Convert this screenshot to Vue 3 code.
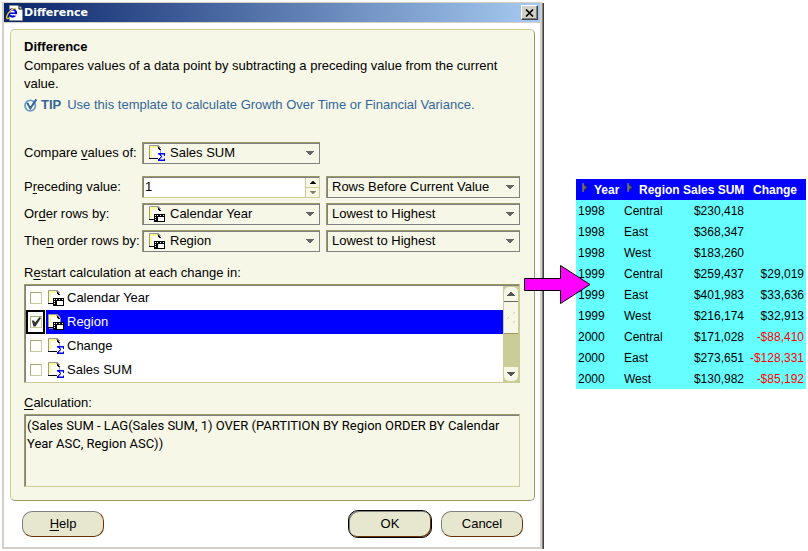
<script setup>
import { ref } from 'vue'

const compare = ref('Sales SUM')
const preceding = ref('1')
const offsetUnit = ref('Rows Before Current Value')
const orderBy = ref('Calendar Year')
const orderDirection = ref('Lowest to Highest')
const thenBy = ref('Region')
const thenDirection = ref('Lowest to Highest')
const formula = ref('(Sales SUM - LAG(Sales SUM, 1) OVER (PARTITION BY Region ORDER BY Calendar Year ASC, Region ASC))')

const items = ref([
  { name: 'Calendar Year', kind: 'axis', checked: false },
  { name: 'Region', kind: 'axis', checked: true },
  { name: 'Change', kind: 'sum', checked: false },
  { name: 'Sales SUM', kind: 'sum', checked: false }
])
const selected = ref(1)

const rows = [
  ['1998', 'Central', '$230,418', ''],
  ['1998', 'East', '$368,347', ''],
  ['1998', 'West', '$183,260', ''],
  ['1999', 'Central', '$259,437', '$29,019'],
  ['1999', 'East', '$401,983', '$33,636'],
  ['1999', 'West', '$216,174', '$32,913'],
  ['2000', 'Central', '$171,028', '-$88,410'],
  ['2000', 'East', '$273,651', '-$128,331'],
  ['2000', 'West', '$130,982', '-$85,192']
]
</script>

<template>
  <svg class="defs" aria-hidden="true">
    <symbol id="page-shape" viewBox="0 0 17 17">
      <path d="M1 0.5H9L12.5 4V14.5H1Z" fill="#fff" />
      <path d="M2 12V2H8" fill="none" stroke="#ffff99" stroke-width="2" />
      <path d="M0.5 14V0.5H8" fill="none" stroke="#999" />
      <path d="M8 0h2v1h1v1h1v1h-2V2H8Z" fill="#999" />
      <path d="M9 2h1v1h1v1h1v1h-2V4H9Z" fill="#000" />
    </symbol>
    <symbol id="icon-axis" viewBox="0 0 17 17">
      <use href="#page-shape" width="17" height="17" />
      <path d="M0 13.5H5" stroke="#000" />
      <path d="M5 8h11v8H5Z" fill="#000" />
      <path d="M9 11h6v4H9Z" fill="#fff" />
      <path d="M6 9h1v1H6ZM6 11h1v1H6ZM6 13h1v1H6ZM8 9h1v1H8ZM11 9h1v1h-1ZM14 9h1v1h-1Z" fill="#fff" />
    </symbol>
    <symbol id="icon-sum" viewBox="0 0 17 17">
      <use href="#page-shape" width="17" height="17" />
      <path d="M0 13.5H9" stroke="#000" />
      <path d="M11.5 5V8" stroke="#999" />
      <path d="M9 8h7v3h-1V9.5h-3v1h1v2h-1v1h-1v1h4v-1h1v2.5H9v-2h1v-1h1v-1h1v-1h-1v-1h-1V9.5H9Z" fill="#0000ff" />
    </symbol>
    <symbol id="icon-down" viewBox="0 0 8 4"><path d="M0 0h8v1H7v1H6v1H5v1H3V3H2V2H1V1H0Z" /></symbol>
    <symbol id="icon-up" viewBox="0 0 8 4"><path d="M0 4h8V3H7V2H6V1H5V0H3v1H2v1H1v1H0Z" /></symbol>
  </svg>

  <main class="page">
    <section class="dialog" role="dialog" aria-labelledby="dialog-title">
      <header class="titlebar">
        <svg class="app-icon" viewBox="0 0 17 16" aria-hidden="true">
          <path d="M3.5 0.5H13L16.5 4V15.5H3.5Z" fill="#fff" stroke="#888" stroke-width=".6" />
          <path d="M13 0V4H17" fill="none" stroke="#000" />
          <circle cx="6.5" cy="8" r="3.6" fill="none" stroke="#0a0ad8" stroke-width="2.2" />
          <path d="M3.5 8.2H10" stroke="#0a0ad8" stroke-width="1.6" />
          <path d="M8 9.2H12V10.6H8Z" fill="#fff" />
          <path d="M10 3.5C7 2.6 2 7 0.8 11.5C0.2 14 1.8 14.4 4 12.5" fill="none" stroke="#e5d51c" stroke-width="1.3" />
        </svg>
        <span id="dialog-title" class="title">Difference</span>
        <button class="close" type="button" aria-label="Close">
          <svg viewBox="0 0 9 8" aria-hidden="true"><path d="M1 0.5L8 7.5M8 0.5L1 7.5" stroke="#000" stroke-width="1.6" /></svg>
        </button>
      </header>

      <div class="content">
        <form class="panel" @submit.prevent>
          <h1>Difference</h1>
          <p>Compares values of a data point by subtracting a preceding value from the current value.</p>
          <p class="tip">
            <svg viewBox="0 0 14 14" aria-hidden="true">
              <circle cx="6.2" cy="7.6" r="5.2" fill="#fff" stroke="#6f9cc6" stroke-width="1.8" />
              <path d="M3.2 4.8L6.3 10.4L12.3 1.4" fill="none" stroke="#336699" stroke-width="2" />
            </svg>
            <strong>TIP</strong><span>Use this template to calculate Growth Over Time or Financial Variance.</span>
          </p>

          <div class="fields">
            <label for="compare">Compare <u>v</u>alues of:</label>
            <div class="combo with-icon">
              <select id="compare" v-model="compare"><option>Sales SUM</option></select>
              <svg class="kind"><use href="#icon-sum" /></svg>
              <svg class="arrow"><use href="#icon-down" /></svg>
            </div>
          </div>

          <div class="fields group">
            <label for="preceding">P<u>r</u>eceding value:</label>
            <div class="spinner">
              <input id="preceding" v-model="preceding" type="text">
              <div class="steps">
                <button type="button" aria-label="Increase"><svg viewBox="0 0 8 4"><use href="#icon-up" /></svg></button>
                <button type="button" aria-label="Decrease" class="dim"><svg viewBox="0 0 8 4"><use href="#icon-down" /></svg></button>
              </div>
            </div>
            <div class="combo">
              <select v-model="offsetUnit" aria-label="Unit"><option>Rows Before Current Value</option></select>
              <svg class="arrow"><use href="#icon-down" /></svg>
            </div>

            <label for="order">Or<u>d</u>er rows by:</label>
            <div class="combo with-icon">
              <select id="order" v-model="orderBy"><option>Calendar Year</option><option>Region</option></select>
              <svg class="kind"><use href="#icon-axis" /></svg>
              <svg class="arrow"><use href="#icon-down" /></svg>
            </div>
            <div class="combo">
              <select v-model="orderDirection" aria-label="Order direction"><option>Lowest to Highest</option><option>Highest to Lowest</option></select>
              <svg class="arrow"><use href="#icon-down" /></svg>
            </div>

            <label for="then">The<u>n</u> order rows by:</label>
            <div class="combo with-icon">
              <select id="then" v-model="thenBy"><option>Calendar Year</option><option>Region</option></select>
              <svg class="kind"><use href="#icon-axis" /></svg>
              <svg class="arrow"><use href="#icon-down" /></svg>
            </div>
            <div class="combo">
              <select v-model="thenDirection" aria-label="Then order direction"><option>Lowest to Highest</option><option>Highest to Lowest</option></select>
              <svg class="arrow"><use href="#icon-down" /></svg>
            </div>
          </div>

          <div id="restart-label" class="caption">R<u>e</u>start calculation at each change in:</div>
          <div class="list" role="group" aria-labelledby="restart-label">
            <div class="items">
              <label v-for="(item, i) in items" :key="item.name" class="item" :class="{ selected: i === selected }" @click="selected = i">
                <span class="tick"><input v-model="item.checked" type="checkbox"></span>
                <span class="entry">
                  <svg class="kind"><use :href="'#icon-' + item.kind" /></svg>
                  {{ item.name }}
                </span>
              </label>
            </div>
            <div class="scrollbar">
              <button type="button" class="up" aria-label="Scroll up"><svg viewBox="0 0 8 4"><use href="#icon-up" /></svg></button>
              <div class="thumb">
                <svg viewBox="0 0 10 12"><path d="M1 7L3 5M7 2L9 0M7 11L9 9" stroke="#cccc99" /></svg>
              </div>
              <button type="button" class="down" aria-label="Scroll down"><svg viewBox="0 0 8 4"><use href="#icon-down" /></svg></button>
            </div>
          </div>

          <label class="caption calc" for="formula"><u>C</u>alculation:</label>
          <textarea id="formula" v-model="formula" readonly></textarea>
        </form>

        <footer class="actions">
          <button type="button"><u>H</u>elp</button>
          <span class="space"></span>
          <button type="button" class="default">OK</button>
          <button type="button">Cancel</button>
        </footer>
      </div>
    </section>

    <section class="result">
      <table>
        <thead>
          <tr>
            <th class="year"><svg class="pivot" viewBox="0 0 6 9"><path d="M1 0.5L5 4.5L1 8.5Z" fill="#666" stroke="#222" /><path d="M1 0V9" stroke="#999" /></svg>Year</th>
            <th class="region"><svg class="pivot" viewBox="0 0 6 9"><path d="M1 0.5L5 4.5L1 8.5Z" fill="#666" stroke="#222" /><path d="M1 0V9" stroke="#999" /></svg>Region</th>
            <th class="sales">Sales SUM</th>
            <th class="change">Change</th>
          </tr>
        </thead>
        <tbody>
          <tr v-for="row in rows" :key="row[0] + row[1]">
            <td>{{ row[0] }}</td>
            <td>{{ row[1] }}</td>
            <td class="num">{{ row[2] }}</td>
            <td class="num" :class="{ negative: row[3].startsWith('-') }">{{ row[3] }}</td>
          </tr>
        </tbody>
      </table>
      <svg class="pointer" viewBox="0 0 67 40" aria-hidden="true">
        <path d="M0.5 13.5H36.5V0.5L66 19.5L36.5 38.5V25.5H0.5Z" fill="#f0f" stroke="#000" />
      </svg>
    </section>
  </main>
</template>

<style>
body {
  background: #fff;
}
</style>

<style scoped>
.defs {
  position: absolute;
  width: 0;
  height: 0;
}
.page {
  display: flex;
  gap: 32px;
  align-items: flex-start;
  padding: 2px 2px 0;
  font: 13px/18px "Liberation Sans", Arial, sans-serif;
  color: #000;
}
.page *,
.page {
  box-sizing: border-box;
}
button,
select,
input,
textarea {
  margin: 0;
  padding: 0;
  font: inherit;
  color: inherit;
  border-radius: 0;
  appearance: none;
}
u {
  text-underline-offset: 2px;
}
.dialog {
  flex: 1;
  min-width: 0;
  border: solid #d4d0c8;
  border-width: 1px 2px 2px;
  box-shadow: 1px 1px #808080, 2px 1px #404040;
  margin-right: 2px;
  background: #fff;
}
.titlebar {
  display: flex;
  align-items: center;
  height: 20px;
  padding: 0 2px;
  border-bottom: 1px solid #d4d0c8;
  background: linear-gradient(90deg, #0a246a, #a6caf0);
}
.app-icon {
  width: 17px;
  height: 16px;
}
.title {
  flex: 1;
  margin-left: 1px;
  font: bold 11px/16px "DejaVu Sans", sans-serif;
  color: #fff;
}
.close {
  display: flex;
  align-items: center;
  justify-content: center;
  width: 17px;
  height: 15px;
  border: 1px solid;
  border-color: #fff #404040 #404040 #fff;
  box-shadow: inset -1px -1px #808080;
  background: #d4d0c8;
}
.close svg {
  width: 9px;
  height: 8px;
}
.content {
  padding: 6px 5px 9px 6px;
}
.panel {
  display: flex;
  flex-direction: column;
  padding: 7px 14px 13px 13px;
  border: 1px solid;
  border-color: #cccc99 #999966 #999966 #cccc99;
  border-radius: 5px;
  background: #f7f7e7;
}
h1 {
  margin: 0;
  font-size: 13px;
  line-height: 20px;
}
p {
  margin: 0;
}
.tip {
  display: flex;
  align-items: center;
  margin: 3px 0 28px;
  color: #336699;
}
.tip svg {
  width: 14px;
  height: 14px;
  margin-right: 3px;
}
.tip span {
  margin-left: 6px;
}
.fields {
  display: grid;
  grid-template-columns: 118px minmax(0, 178fr) minmax(0, 200fr);
  gap: 5px 0;
  align-items: center;
}
.fields.group {
  margin-top: 12px;
}
.fields > :nth-child(3n) {
  margin-left: 6px;
}
.fields label {
  white-space: nowrap;
}
.combo {
  display: grid;
  grid-template-columns: minmax(0, 1fr) 19px;
  align-items: center;
  height: 22px;
  border: 1px solid;
  border-color: #999966 #808080 #808080 #999966;
  box-shadow: inset 1px 1px #808080;
}
.combo select {
  grid-area: 1 / 1 / 2 / 3;
  width: 100%;
  height: 20px;
  padding-left: 5px;
  border: 0;
  background: transparent;
}
.combo.with-icon select {
  padding-left: 27px;
}
.kind {
  width: 17px;
  height: 17px;
  margin-top: 1px;
}
.combo .kind {
  grid-area: 1 / 1;
  margin-left: 6px;
  pointer-events: none;
}
.arrow {
  grid-area: 1 / 2;
  width: 8px;
  height: 4px;
  margin-left: 6px;
  fill: #666;
  pointer-events: none;
}
.spinner {
  display: flex;
  height: 22px;
  border: 1px solid;
  border-color: #999966 #cccc99 #cccc99 #999966;
  box-shadow: inset 1px 1px #808080;
  background: #fff;
}
.spinner input {
  flex: 1;
  min-width: 0;
  padding-left: 2px;
  border: 0;
  background: transparent;
}
.steps {
  display: grid;
  width: 14px;
  margin-top: 1px;
  border-left: 1px solid #cccc99;
  background: #f7f7e7;
}
.steps button,
.scrollbar button {
  display: flex;
  align-items: center;
  justify-content: center;
  border: 0;
  background: #f7f7e7;
}
.steps .dim {
  border-top: 1px solid #cccc99;
  fill: #808066;
}
.steps svg {
  width: 6px;
  height: 3px;
}
.caption {
  margin: 12px 0 2px;
}
.calc {
  margin-top: 11px;
}
.list {
  display: flex;
  border: 1px solid;
  border-color: #999966 #cccc99 #cccc99 #999966;
  box-shadow: inset 1px 1px #808080;
  padding: 1px 0 0 1px;
  background: #fff;
}
.items {
  flex: 1;
}
.item {
  display: flex;
  height: 24px;
}
.tick {
  display: flex;
  align-items: center;
  justify-content: center;
  width: 19px;
  padding-left: 1px;
  border: 2px solid transparent;
}
.selected .tick {
  border-color: #000;
}
.tick input {
  width: 12px;
  height: 12px;
  border: 1px solid;
  border-color: #aaaa77 #cccc99 #cccc99 #aaaa77;
  background: #fff;
}
.tick input:checked {
  display: grid;
}
.tick input:checked::before {
  content: "";
  width: 10px;
  height: 10px;
  background: #333;
  clip-path: polygon(8% 35%, 30% 35%, 40% 55%, 85% 0, 100% 10%, 45% 95%, 25% 95%);
}
.entry {
  flex: 1;
  display: flex;
  align-items: center;
  gap: 2px;
  margin-left: 1px;
  padding-left: 2px;
}
.selected .entry {
  background: #0000ff;
  color: #fff;
}
.scrollbar {
  display: flex;
  flex-direction: column;
  width: 16px;
  padding: 1px;
  background: #cccc99;
  fill: #555;
}
.scrollbar button {
  height: 14px;
}
.scrollbar button svg {
  width: 8px;
  height: 4px;
}
.scrollbar .up {
  border-radius: 5px 5px 0 0;
}
.scrollbar .down {
  margin-top: auto;
  border-radius: 0 0 5px 5px;
}
.thumb {
  display: flex;
  align-items: center;
  justify-content: center;
  height: 33px;
  border-top: 1px solid #666;
  border-bottom: 1px solid #999966;
  background: #f7f7e7;
}
.thumb svg {
  width: 10px;
  height: 12px;
}
textarea {
  display: block;
  width: 100%;
  height: 73px;
  padding: 2px 0 0 2px;
  border: 1px solid;
  border-color: #999966 #cccc99 #cccc99 #999966;
  box-shadow: inset 1px 1px #808080;
  background: transparent;
  font-family: Roboto, sans-serif;
  resize: none;
  overflow: hidden;
}
.actions {
  display: flex;
  align-items: center;
  gap: 9px;
  padding: 9px 12px 0;
}
.actions button {
  width: 82px;
  height: 26px;
  border: 1px solid;
  border-color: #808080 #663300 #663300 #808080;
  border-radius: 10px;
  background: #e7e7d0;
}
.actions .default {
  width: 84px;
  height: 28px;
  border: 1px solid #000;
  box-shadow: inset 1px 1px #808080, inset -1px -1px #663300;
}
.space {
  flex: 1;
}
.result {
  position: relative;
  width: 230px;
  margin-top: 177px;
  font-size: 12px;
}
table {
  width: 100%;
  table-layout: fixed;
  border-collapse: collapse;
  background: #66ffff;
}
th,
td {
  height: 21px;
  padding: 1px 2px 0;
  line-height: 20px;
  text-align: left;
  white-space: nowrap;
}
td {
  padding-top: 2px;
  line-height: 19px;
}
th {
  background: #0000ff;
  color: #fff;
}
.year {
  width: 46px;
  padding-left: 6px;
}
.region {
  width: 59px;
  padding-left: 5px;
}
.sales {
  width: 65px;
}
.change {
  padding-left: 7px;
}
.pivot {
  width: 6px;
  height: 9px;
  margin-right: 6px;
  vertical-align: 2px;
}
.num {
  text-align: right;
}
.negative {
  color: #ff0000;
}
.pointer {
  position: absolute;
  top: 86px;
  left: -52px;
  width: 67px;
  height: 40px;
}
</style>
